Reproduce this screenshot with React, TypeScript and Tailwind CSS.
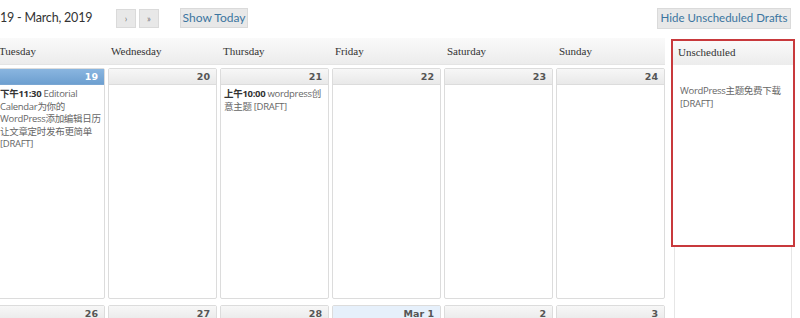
import React from 'react';

const days = ['Tuesday', 'Wednesday', 'Thursday', 'Friday', 'Saturday', 'Sunday'];

interface Cell {
  label: string;
  today?: boolean;
  soft?: boolean;
  posts?: { time: string; title: string }[];
}

const week1: Cell[] = [
  {
    label: '19',
    today: true,
    posts: [{ time: '下午11:30', title: 'Editorial Calendar为你的WordPress添加编辑日历让文章定时发布更简单 [DRAFT]' }],
  },
  { label: '20' },
  { label: '21', posts: [{ time: '上午10:00', title: 'wordpress创意主题 [DRAFT]' }] },
  { label: '22' },
  { label: '23' },
  { label: '24' },
];

const week2: Cell[] = [
  { label: '26' },
  { label: '27' },
  { label: '28' },
  { label: 'Mar 1', soft: true },
  { label: '2' },
  { label: '3' },
];

const cellFont = { fontFamily: '"Open Sans", "Noto Sans CJK SC", sans-serif' };

function DayCell({ cell, tall }: { cell: Cell; tall: boolean }) {
  const head = cell.today
    ? 'bg-gradient-to-b from-[#8ab6e0] to-[#6d9fd0] text-white border-[#7aa6d2]'
    : cell.soft
      ? 'bg-[#e6f0fb] text-[#555] border-[#dce8f5]'
      : 'bg-gradient-to-b from-[#f7f7f7] to-[#e9e9e9] text-[#555] border-[#dcdcdc]';
  return (
    <div className={`flex flex-col border border-[#dcdcdc] rounded-[2px] bg-white ${tall ? 'h-[231px]' : 'h-[40px]'}`}>
      <div className={`h-[16px] border-b px-[6px] text-right text-[9.5px] font-bold leading-[15px] ${head}`} style={{ fontFamily: '"DejaVu Sans", Verdana, sans-serif' }}>
        {cell.label}
      </div>
      <div className="pl-[3px] pr-[1px] pt-[3px] text-[9.5px] leading-[12.5px] tracking-[-0.3px] text-[#666]" style={cellFont}>
        {cell.posts?.map((p, i) => (
          <div key={i}>
            <b className="text-[#333]">{p.time}</b> {p.title}
          </div>
        ))}
      </div>
    </div>
  );
}

export default function App() {
  return (
    <div className="w-[800px] h-[318px] overflow-hidden bg-white" style={{ fontFamily: 'Lato, "Open Sans", sans-serif' }}>
      <div className="flex items-center h-[38px] pb-[2px]">
        <div className="text-[12.5px] tracking-[-0.2px] text-[#333] w-[116px]">19 - March, 2019</div>
        <div className="flex gap-[3px]">
          <button className="w-[20px] h-[19px] bg-[#e8e8e8] border border-[#dadada] text-[9px] text-[#777] leading-none">›</button>
          <button className="w-[20px] h-[19px] bg-[#e8e8e8] border border-[#dadada] text-[9px] text-[#777] leading-none">»</button>
        </div>
        <button className="ml-[21px] w-[68px] h-[20px] bg-[#e8e8e8] border border-[#dadada] text-[12px] text-[#3b75a0] leading-none">Show Today</button>
        <button className="ml-auto mr-[9px] w-[134px] h-[21px] whitespace-nowrap bg-[#e8e8e8] border border-[#dadada] text-[11.5px] text-[#3b75a0] leading-none">Hide Unscheduled Drafts</button>
      </div>

      <div className="flex">
        <div className="w-[669px] ml-[-4px] shrink-0">
          <div className="grid grid-cols-6 gap-x-[3px] h-[27px] bg-gradient-to-b from-[#fafafa] to-[#ececec] border-b border-[#e4e4e4]">
            {days.map((d) => (
              <div key={d} className="pl-[3px] text-[11px] leading-[26px] text-[#333]" style={{ fontFamily: '"Liberation Serif", serif' }}>
                {d}
              </div>
            ))}
          </div>
          <div className="grid grid-cols-6 gap-x-[3px] mt-[3px]">
            {week1.map((c) => (
              <DayCell key={c.label} cell={c} tall />
            ))}
          </div>
          <div className="grid grid-cols-6 gap-x-[3px] mt-[6px]">
            {week2.map((c) => (
              <DayCell key={c.label} cell={c} tall={false} />
            ))}
          </div>
        </div>

        <div className="w-[124px] ml-[6px] mt-[1px] flex flex-col shrink-0">
          <div className="h-[208px] border-2 border-[#c8393c] bg-white flex flex-col">
            <div className="h-[24px] bg-gradient-to-b from-[#fafafa] to-[#ececec] pl-[5px] text-[11px] leading-[23px] text-[#333]" style={{ fontFamily: '"Liberation Serif", serif' }}>
              Unscheduled
            </div>
            <div className="px-[7px] pt-[20px] text-[9.5px] leading-[12.5px] tracking-[-0.3px] text-[#666]" style={cellFont}>
              WordPress主题免费下载 [DRAFT]
            </div>
          </div>
          <div className="mx-[3px] h-[80px] border-x border-[#e6e6e6]" />
        </div>
      </div>
    </div>
  );
}
